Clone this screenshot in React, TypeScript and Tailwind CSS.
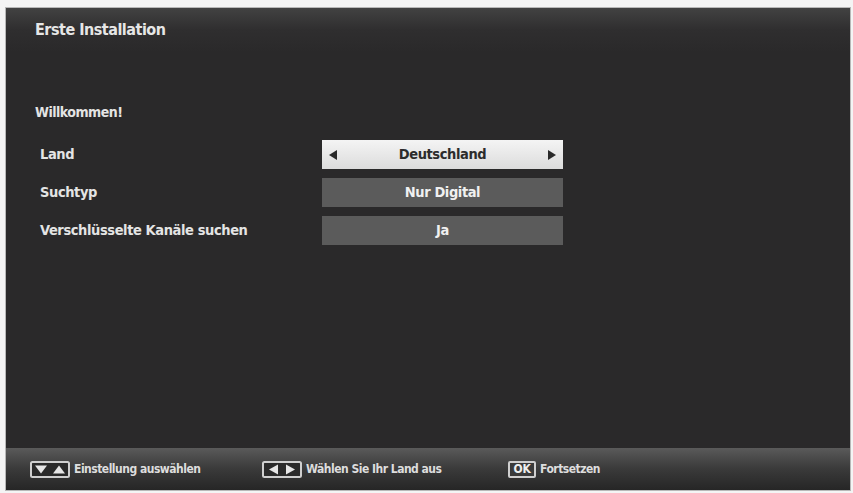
import React from "react";

const font = { fontFamily: '"DejaVu Sans Condensed", "DejaVu Sans", sans-serif' };

function KeyUpDown() {
  return (
    <svg width="40" height="17" viewBox="0 0 40 17" className="shrink-0">
      <rect x="1" y="1" width="38" height="15" rx="1.5" fill="#2a2a2a" stroke="#cfcfcf" strokeWidth="2" />
      <path d="M5 4.5 H17 L11 12.5 Z" fill="#e6e6e6" />
      <path d="M23 12.5 H35 L29 4.5 Z" fill="#e6e6e6" />
    </svg>
  );
}

function KeyLeftRight() {
  return (
    <svg width="40" height="17" viewBox="0 0 40 17" className="shrink-0">
      <rect x="1" y="1" width="38" height="15" rx="1.5" fill="#2a2a2a" stroke="#cfcfcf" strokeWidth="2" />
      <path d="M16 3.5 V13.5 L7 8.5 Z" fill="#e6e6e6" />
      <path d="M24 3.5 V13.5 L33 8.5 Z" fill="#e6e6e6" />
    </svg>
  );
}

function KeyOk() {
  return (
    <div className="flex h-[17px] w-[28px] shrink-0 items-center justify-center rounded-[2px] border-2 border-[#cfcfcf] bg-[#3a3a3a] text-[12px] font-bold leading-none tracking-[-0.3px] text-[#eeeeee]">
      OK
    </div>
  );
}

function Arrow({ dir }: { dir: "left" | "right" }) {
  return (
    <svg width="8" height="10" viewBox="0 0 8 10" className="shrink-0">
      <path d={dir === "left" ? "M8 0 V10 L0 5 Z" : "M0 0 V10 L8 5 Z"} fill="#2a2a2a" />
    </svg>
  );
}

function Row({ label, children }: { label: string; children: React.ReactNode }) {
  return (
    <div className="flex h-[29px] items-center">
      <div className="w-[287px] pl-[5px] text-[14.5px] font-bold tracking-[-0.4px] text-[#e4e4e4]">{label}</div>
      {children}
    </div>
  );
}

export default function App() {
  return (
    <div className="h-[493px] w-[853px] bg-[#f4f4f4] pl-[5px] pt-[7px]" style={font}>
      <div className="flex h-[484px] w-[846px] flex-col border border-[#b8b8b8] bg-[#2a292a]">
        <div className="h-[44px] bg-gradient-to-b from-[#424242] via-[#2f2e2f] to-[#2a292a] pl-[29px] pt-[10px] text-[16px] font-bold leading-[24px] tracking-[-0.5px] text-[#e6e6e6]">
          Erste Installation
        </div>

        <div className="flex-1 pl-[29px]">
          <div className="mt-[48px] h-[24px] text-[14px] font-bold leading-[24px] tracking-[-0.5px] text-[#e4e4e4]">Willkommen!</div>

          <div className="mt-[16px] flex flex-col gap-[9px]">
            <Row label="Land">
              <div className="flex h-[29px] w-[241px] items-center justify-between bg-gradient-to-b from-[#f4f4f4] to-[#dcdcdc] px-[7px] text-[14.5px] font-bold tracking-[-0.4px] text-[#2c2c2c]">
                <Arrow dir="left" />
                <span>Deutschland</span>
                <Arrow dir="right" />
              </div>
            </Row>
            <Row label="Suchtyp">
              <div className="flex h-[29px] w-[241px] items-center justify-center bg-[#5b5b5b] text-[14.5px] font-bold tracking-[-0.4px] text-[#f0f0f0]">
                Nur Digital
              </div>
            </Row>
            <Row label="Verschlüsselte Kanäle suchen">
              <div className="flex h-[29px] w-[241px] items-center justify-center bg-[#5b5b5b] text-[14.5px] font-bold tracking-[-0.4px] text-[#f0f0f0]">
                Ja
              </div>
            </Row>
          </div>
        </div>

        <div className="flex h-[42px] items-center bg-gradient-to-b from-[#5a5a5a] via-[#3a3a3a] to-[#262626] pl-[24px] text-[12px] font-bold tracking-[-0.5px] text-[#dddddd]">
          <div className="flex w-[232px] items-center gap-[4px]">
            <KeyUpDown />
            <span>Einstellung auswählen</span>
          </div>
          <div className="flex w-[246px] items-center gap-[4px]">
            <KeyLeftRight />
            <span>Wählen Sie Ihr Land aus</span>
          </div>
          <div className="flex items-center gap-[4px]">
            <KeyOk />
            <span>Fortsetzen</span>
          </div>
        </div>
      </div>
    </div>
  );
}
